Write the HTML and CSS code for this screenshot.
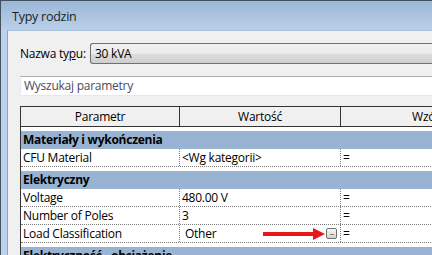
FILE: index.html
```html
<!DOCTYPE html>
<html lang="pl">
<head>
  <meta charset="UTF-8">
  <title>Typy rodzin</title>
  <link rel="stylesheet" href="styles.css">
</head>
<body>
  <div class="window">
    <div class="titlebar">Typy rodzin</div>
    <div class="frame">
      <div class="content">
        <div class="type-row">
          <span class="label">Nazwa ty<u>p</u>u:</span>
          <div class="combo">30 kVA</div>
        </div>
        <div class="search">Wyszukaj parametry</div>
        <div class="grid-wrap">
          <div class="grid">
            <div class="row head">
              <div class="cell">Parametr</div>
              <div class="cell">Wartość</div>
              <div class="cell">Wzór</div>
            </div>
            <div class="cat">Materiały i wykończenia</div>
            <div class="row">
              <div class="cell">CFU Material</div>
              <div class="cell">&lt;Wg kategorii&gt;</div>
              <div class="cell">=</div>
            </div>
            <div class="cat">Elektryczny</div>
            <div class="row">
              <div class="cell">Voltage</div>
              <div class="cell">480.00 V</div>
              <div class="cell">=</div>
            </div>
            <div class="row">
              <div class="cell">Number of Poles</div>
              <div class="cell">3</div>
              <div class="cell">=</div>
            </div>
            <div class="row">
              <div class="cell">Load Classification</div>
              <div class="cell edit">Other<span class="dots">...</span></div>
              <div class="cell">=</div>
            </div>
            <div class="cat">Elektryczność - obciążenie</div>
          </div>
          <svg class="arrow" width="62" height="13" viewBox="0 0 62 13">
            <rect x="0" y="4" width="51" height="4" fill="#e8151b"/>
            <polygon points="50,0 62,6 50,12" fill="#e8151b"/>
          </svg>
        </div>
      </div>
    </div>
  </div>
</body>
</html>
```

FILE: styles.css
```css
body { margin: 0; font-family: 'Open Sans', 'Noto Sans', sans-serif; font-size: 12px; letter-spacing: -0.25px; color: #000; }
.window {
  width: 431px; height: 254px; overflow: hidden;
  border-top: 1px solid #44515f; border-left: 1px solid #44515f;
  background: #bcd3eb; display: flex; flex-direction: column;
}
.titlebar {
  height: 29px; line-height: 31px; padding-left: 11px; flex-shrink: 0;
  background: linear-gradient(#9bb7d7, #b9d0e9);
  color: #1e1e1e; font-size: 12.5px;
}
.frame { flex: 1; padding-left: 6px; display: flex; }
.content {
  flex: 1; background: #f0f0f0;
  border-left: 1px solid #8ea5bf; border-top: 1px solid #a9bdd4;
  padding: 12px 0 0 12px;
  display: flex; flex-direction: column;
}
.type-row { display: flex; align-items: center; height: 21px; }
.label { width: 70px; }
.combo {
  flex: 1; height: 19px; line-height: 19px; padding-left: 4px;
  border: 1px solid #707070; border-right: none; border-radius: 3px 0 0 3px;
  background: linear-gradient(#f2f2f2 0%, #ebebeb 50%, #dddddd 51%, #cfcfcf 100%);
}
.search {
  margin-top: 12px; height: 18px; line-height: 18px; padding-left: 3px;
  background: #fff; border: 1px solid #e3e9ef; border-top-color: #abadb3; border-right: none;
  color: #4a4a5c;
}
.grid-wrap { position: relative; margin-top: 10px; }
.grid { width: 490px; background: #fff; border-left: 1px solid #333; }
.row { display: grid; grid-template-columns: 159px 161px 1fr; height: 17px; border-bottom: 1px dotted #7a7a7a; }
.row .cell { padding-left: 2px; line-height: 17px; white-space: nowrap; border-right: 1px dotted #7a7a7a; }
.row .cell:last-child { border-right: none; }
.row .edit { position: relative; padding-left: 5px; }
.dots {
  position: absolute; right: 3px; top: 3px; width: 9px; height: 9px;
  border: 1px solid #707070; border-radius: 2px;
  background: linear-gradient(#f8f8f8, #d4d4d4);
  font-size: 8px; line-height: 6px; text-align: center; letter-spacing: -1px; color: #222;
}
.head {
  height: 19px; background: #f0f0f0;
  border-top: 1px solid #333; border-bottom: 1px solid #333;
}
.head .cell { text-align: center; line-height: 19px; border-right: 1px solid #333; padding-left: 0; }
.cat {
  margin-top: 4px; height: 18px; line-height: 18px; padding-left: 2px;
  background: #99b4d3; font-weight: bold; white-space: nowrap;
}
.arrow { position: absolute; left: 243px; top: 122px; }
```
